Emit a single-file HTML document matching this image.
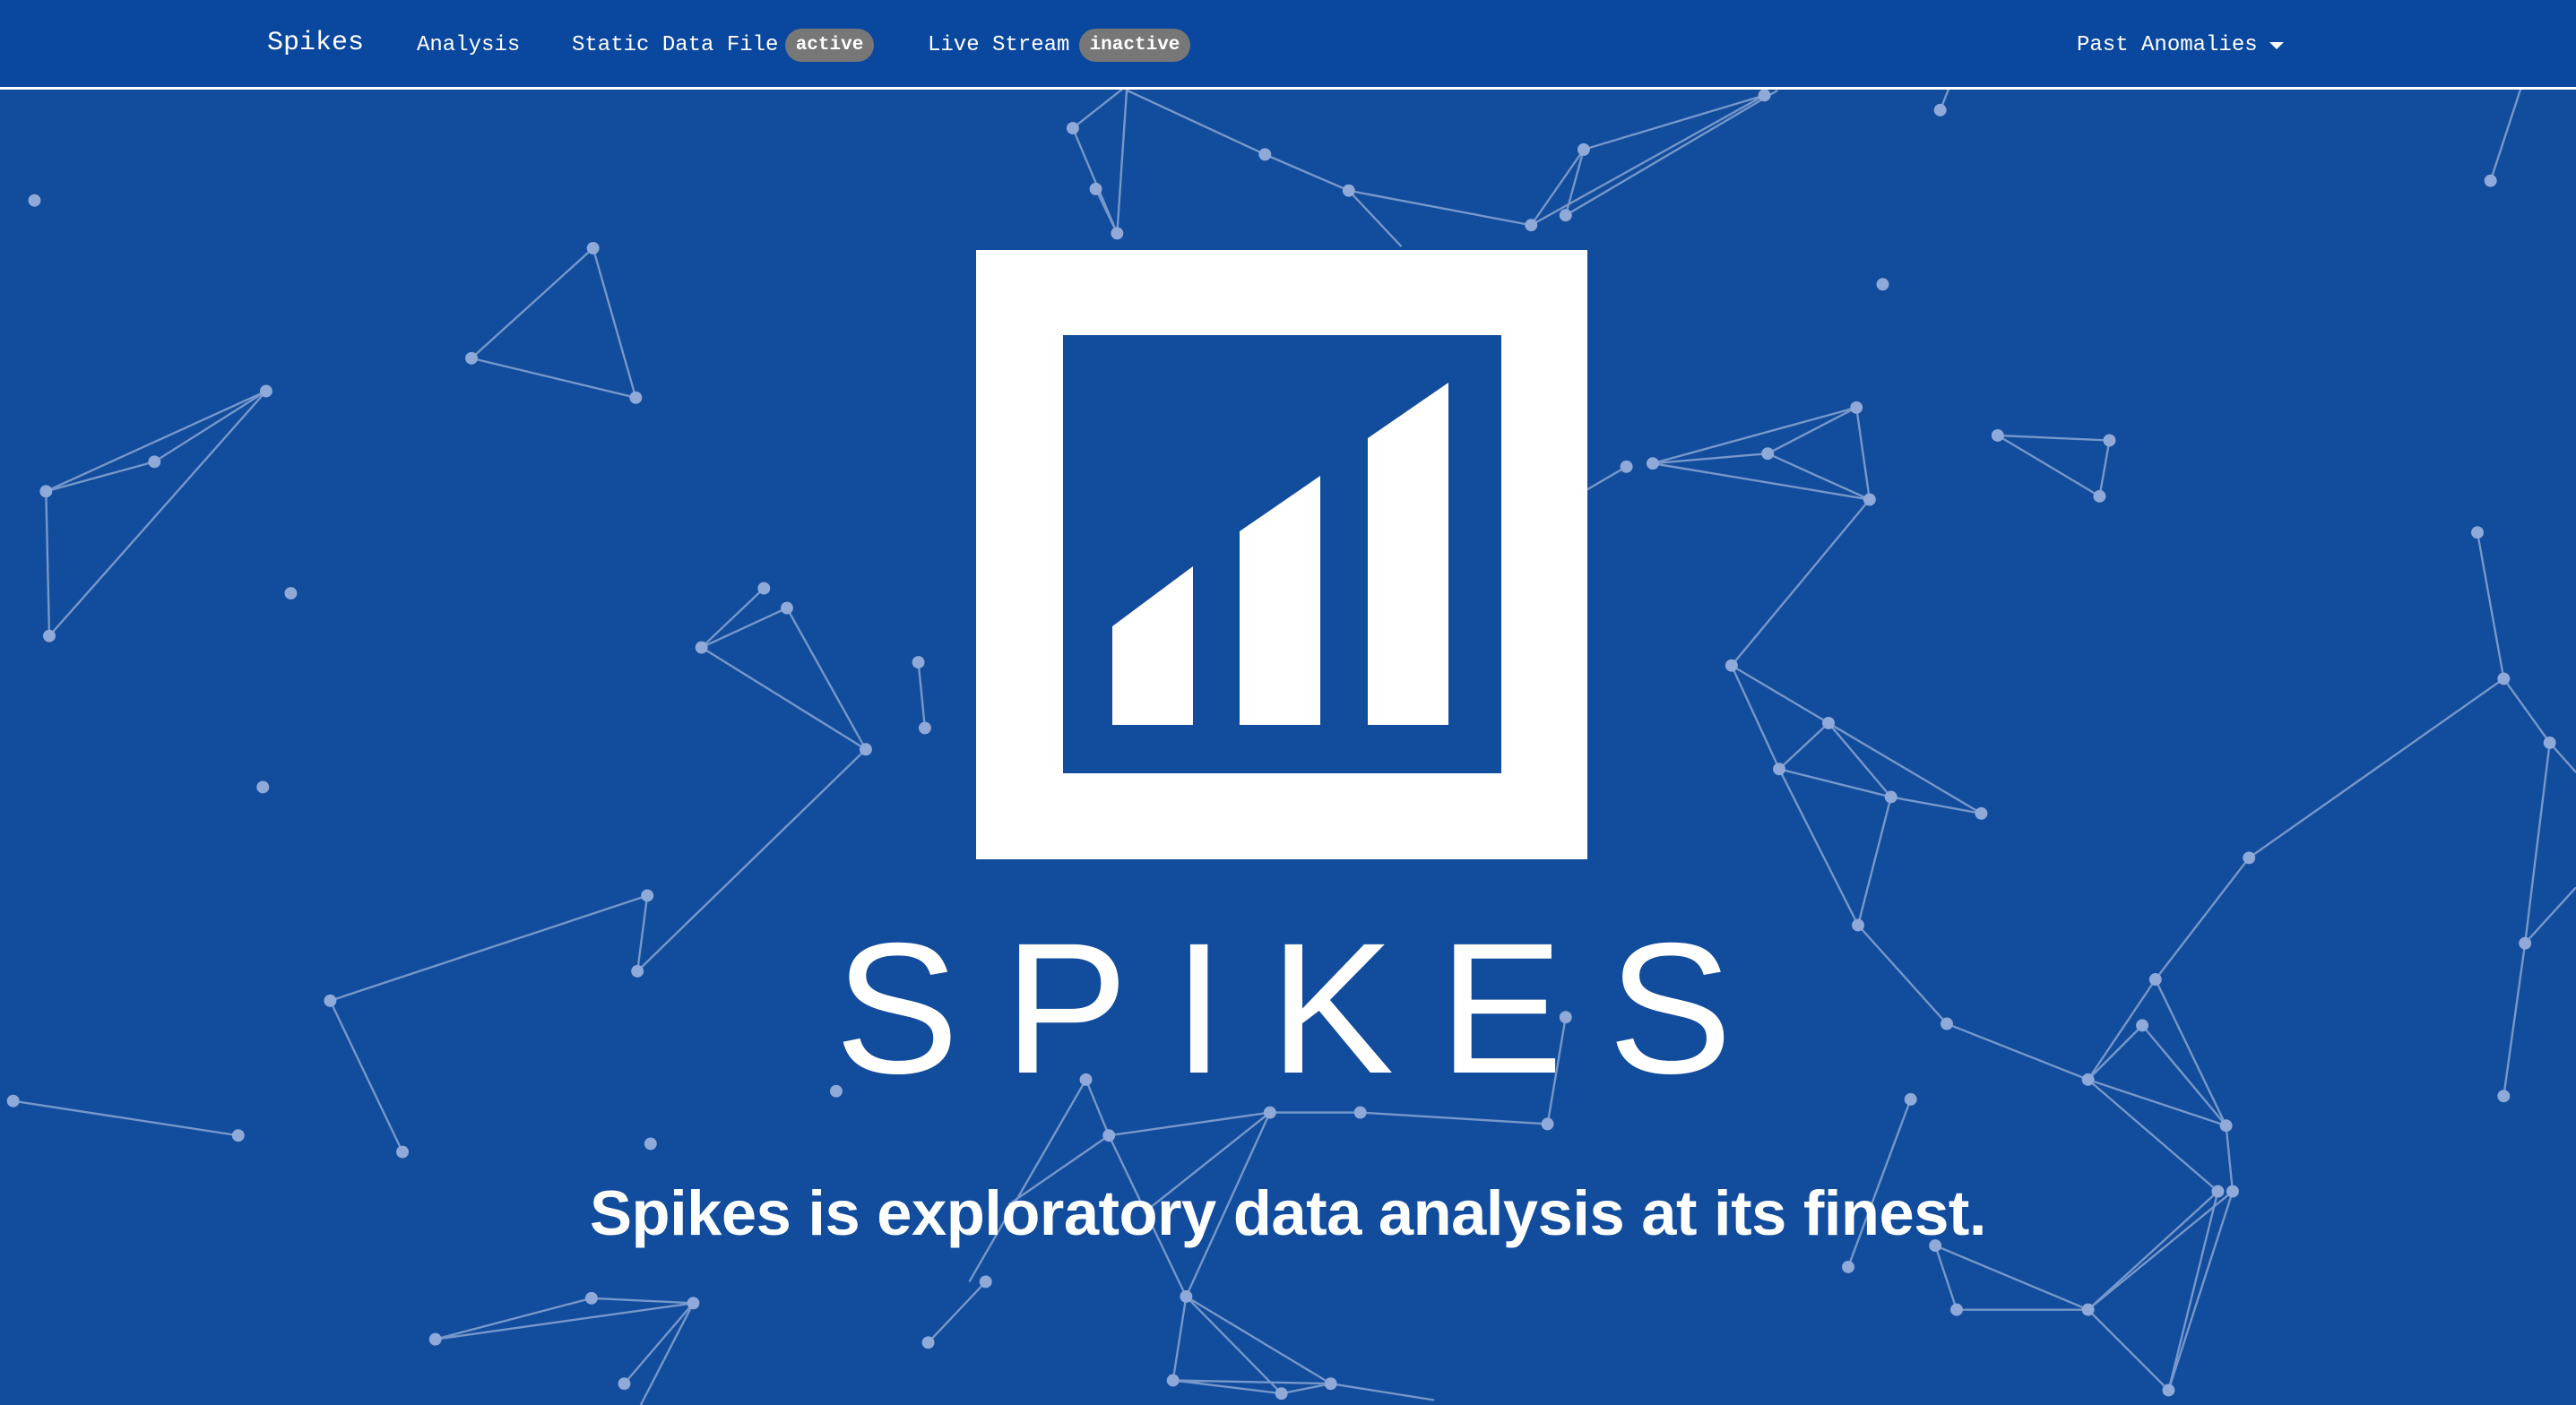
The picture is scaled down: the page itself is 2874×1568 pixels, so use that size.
<!DOCTYPE html>
<html><head><meta charset="utf-8"><style>
html,body{margin:0;padding:0;width:2874px;height:1568px;overflow:hidden;background:#124c9c;font-family:"Liberation Sans",sans-serif}
#nav{position:absolute;left:0;top:0;width:2874px;height:97px;background:#0a479e;border-bottom:3px solid #fff;z-index:3}
.ni{position:absolute;top:32px;color:#fff;font-family:"Liberation Mono",monospace;font-size:24px;line-height:38px;white-space:nowrap}
.badge{position:absolute;top:32px;height:37px;line-height:37px;background:#777;color:#fff;border-radius:19px;font-family:"Liberation Mono",monospace;font-weight:bold;font-size:21px;text-align:center}
svg.net{position:absolute;left:0;top:0;z-index:1}
#logo{position:absolute;left:1089px;top:279px;width:682px;height:680px;background:#fff;z-index:2}
#inner{position:absolute;left:97px;top:95px;width:489px;height:489px;background:#124c9c}
#big{position:absolute;left:0;width:2874px;top:1022px;text-align:center;color:#fff;font-size:208px;line-height:208px;letter-spacing:50px;text-indent:40px;z-index:2}
#tag{position:absolute;left:0;width:2874px;top:1314px;text-align:center;color:#fff;font-weight:bold;font-size:70.5px;line-height:80px;z-index:2;letter-spacing:-0.5px}
</style></head><body>
<div id="nav">
<div class="ni" style="left:298px;font-size:30px;top:29px">Spikes</div>
<div class="ni" style="left:465px">Analysis</div>
<div class="ni" style="left:638px">Static Data File</div>
<div class="badge" style="left:876px;width:99px">active</div>
<div class="ni" style="left:1035px">Live Stream</div>
<div class="badge" style="left:1204px;width:124px">inactive</div>
<div class="ni" style="left:2317px">Past Anomalies</div>
<div style="position:absolute;left:2532px;top:47px;width:0;height:0;border-left:8px solid transparent;border-right:8px solid transparent;border-top:8px solid #fff"></div>
</div>
<svg class="net" width="2874" height="1568" viewBox="0 0 1568 855" preserveAspectRatio="none">
<g stroke="rgba(200,215,240,0.55)" stroke-width="1.3" fill="none">
<path d="M361 151L287 218L387 242Z M162 238L94 281L28 299Z M28 299L30 387L162 238
M465 358L427 394 M479 370L427 394L527 456L479 370 M527 456L388 591 M559 403L563 443
M394 545L388 591 M394 545L201 609L245 701 M8 670L145 691
M265 815L360 790L422 793L265 815 M422 793L380 842 M422 793L390 855 M600 780L565 817
M653 78L686 52 M653 78L680 142L686 52 M667 115L680 142 M686 55L770 94L821 116L932 137 M821 116L853 150
M932 137L964 91L1074 58L932 137 M953 131L964 91 M953 131L1082 55 M1181 67L1187 52 M1516 110L1535 52
M966 298L990 284 M1006 282L1130 248L1138 304L1006 282L1076 276L1130 248 M1076 276L1138 304
M1216 265L1284 268L1278 302Z M1138 304L1054 405L1113 440L1083 468L1054 405 M1113 440L1151 485L1083 468 M1113 440L1206 495L1151 485L1131 563L1083 468 M1131 563L1185 623L1271 657
M1508 324L1524 413L1552 452L1537 574L1524 667 M1524 413L1369 522L1312 596 M1537 574L1568 540 M1552 452L1568 470
M1312 596L1271 657L1355 685L1312 596 M1304 624L1271 657 M1304 624L1355 685L1359 725L1320 846 M1271 657L1350 725L1320 846
M1163 669L1125 771 M1178 758L1271 797L1191 797L1178 758 M1271 797L1359 725 M1271 797L1350 725 M1271 797L1320 846
M661 657L675 691L773 677L828 677L942 684L953 619 M661 657L590 780 M675 691L722 789L773 677L700 735 M675 691L614 733
M722 789L714 840L780 848L810 842L873 852 M722 789L780 848 M722 789L810 842 M714 840L810 842
M660 436L680 428 M895 470L915 455"/>
</g>
<g fill="#8fa9d8">
<circle cx="21" cy="122" r="3.8"/><circle cx="361" cy="151" r="3.8"/><circle cx="287" cy="218" r="3.8"/><circle cx="387" cy="242" r="3.8"/>
<circle cx="162" cy="238" r="3.8"/><circle cx="94" cy="281" r="3.8"/><circle cx="28" cy="299" r="3.8"/><circle cx="30" cy="387" r="3.8"/>
<circle cx="177" cy="361" r="3.8"/><circle cx="160" cy="479" r="3.8"/><circle cx="465" cy="358" r="3.8"/><circle cx="479" cy="370" r="3.8"/>
<circle cx="427" cy="394" r="3.8"/><circle cx="527" cy="456" r="3.8"/><circle cx="559" cy="403" r="3.8"/><circle cx="563" cy="443" r="3.8"/>
<circle cx="394" cy="545" r="3.8"/><circle cx="388" cy="591" r="3.8"/><circle cx="201" cy="609" r="3.8"/><circle cx="245" cy="701" r="3.8"/>
<circle cx="8" cy="670" r="3.8"/><circle cx="145" cy="691" r="3.8"/><circle cx="396" cy="696" r="3.8"/><circle cx="509" cy="664" r="3.8"/>
<circle cx="265" cy="815" r="3.8"/><circle cx="360" cy="790" r="3.8"/><circle cx="422" cy="793" r="3.8"/><circle cx="380" cy="842" r="3.8"/>
<circle cx="600" cy="780" r="3.8"/><circle cx="565" cy="817" r="3.8"/>
<circle cx="653" cy="78" r="3.8"/><circle cx="667" cy="115" r="3.8"/><circle cx="680" cy="142" r="3.8"/><circle cx="770" cy="94" r="3.8"/>
<circle cx="821" cy="116" r="3.8"/><circle cx="932" cy="137" r="3.8"/><circle cx="953" cy="131" r="3.8"/><circle cx="964" cy="91" r="3.8"/>
<circle cx="1074" cy="58" r="3.8"/><circle cx="1181" cy="67" r="3.8"/><circle cx="1146" cy="173" r="3.8"/><circle cx="1516" cy="110" r="3.8"/>
<circle cx="990" cy="284" r="3.8"/><circle cx="1006" cy="282" r="3.8"/><circle cx="1076" cy="276" r="3.8"/><circle cx="1130" cy="248" r="3.8"/><circle cx="1138" cy="304" r="3.8"/>
<circle cx="1216" cy="265" r="3.8"/><circle cx="1284" cy="268" r="3.8"/><circle cx="1278" cy="302" r="3.8"/>
<circle cx="1054" cy="405" r="3.8"/><circle cx="1113" cy="440" r="3.8"/><circle cx="1083" cy="468" r="3.8"/><circle cx="1151" cy="485" r="3.8"/><circle cx="1206" cy="495" r="3.8"/><circle cx="1131" cy="563" r="3.8"/><circle cx="1185" cy="623" r="3.8"/>
<circle cx="1508" cy="324" r="3.8"/><circle cx="1524" cy="413" r="3.8"/><circle cx="1552" cy="452" r="3.8"/><circle cx="1369" cy="522" r="3.8"/><circle cx="1537" cy="574" r="3.8"/><circle cx="1524" cy="667" r="3.8"/>
<circle cx="1312" cy="596" r="3.8"/><circle cx="1304" cy="624" r="3.8"/><circle cx="1271" cy="657" r="3.8"/><circle cx="1355" cy="685" r="3.8"/><circle cx="1350" cy="725" r="3.8"/><circle cx="1359" cy="725" r="3.8"/>
<circle cx="1163" cy="669" r="3.8"/><circle cx="1125" cy="771" r="3.8"/><circle cx="1178" cy="758" r="3.8"/><circle cx="1191" cy="797" r="3.8"/><circle cx="1271" cy="797" r="3.8"/><circle cx="1320" cy="846" r="3.8"/>
<circle cx="661" cy="657" r="3.8"/><circle cx="675" cy="691" r="3.8"/><circle cx="773" cy="677" r="3.8"/><circle cx="828" cy="677" r="3.8"/><circle cx="942" cy="684" r="3.8"/><circle cx="953" cy="619" r="3.8"/>
<circle cx="722" cy="789" r="3.8"/><circle cx="714" cy="840" r="3.8"/><circle cx="780" cy="848" r="3.8"/><circle cx="810" cy="842" r="3.8"/>
<circle cx="660" cy="436" r="3.8"/>
</g>
</svg>
<div id="logo"><div id="inner">
<svg width="489" height="489" viewBox="0 0 489 489" style="position:absolute;left:0;top:0">
<g fill="#fff">
<polygon points="55,325 145,258 145,435 55,435"/>
<polygon points="197,219 287,157 287,435 197,435"/>
<polygon points="340,115 430,53 430,435 340,435"/>
</g></svg>
</div></div>
<div id="big">SPIKES</div>
<div id="tag">Spikes is exploratory data analysis at its finest.</div>
</body></html>
